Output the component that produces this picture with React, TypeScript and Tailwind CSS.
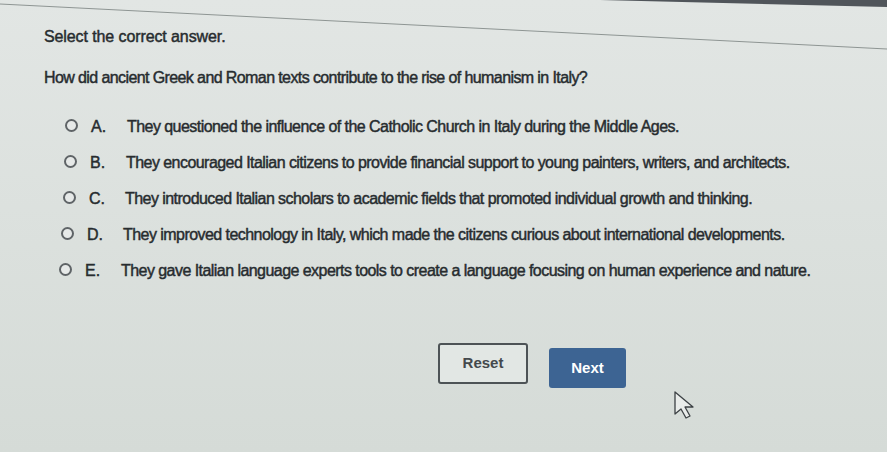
import React from "react";

const options = [
  { l: "A.", t: "They questioned the influence of the Catholic Church in Italy during the Middle Ages.", pl: "pl-[21px]" },
  { l: "B.", t: "They encouraged Italian citizens to provide financial support to young painters, writers, and architects.", pl: "pl-[20px]" },
  { l: "C.", t: "They introduced Italian scholars to academic fields that promoted individual growth and thinking.", pl: "pl-[19px]" },
  { l: "D.", t: "They improved technology in Italy, which made the citizens curious about international developments.", pl: "pl-[17px]" },
  { l: "E.", t: "They gave Italian language experts tools to create a language focusing on human experience and nature.", pl: "pl-[15px]" },
];

export default function App() {
  return (
    <div className="relative w-[887px] h-[452px] overflow-hidden bg-[#d9dedb] text-[#272c2f] [font-family:'Liberation_Sans',Arial,sans-serif] [-webkit-text-stroke:0.45px_#272c2f]">
      <svg className="absolute inset-0 pointer-events-none" width="887" height="452">
        <defs>
          <linearGradient id="g" x1="0" y1="0" x2="0" y2="1">
            <stop offset="0" stopColor="#e2e6e4" />
            <stop offset="1" stopColor="#d5dbd7" />
          </linearGradient>
        </defs>
        <rect width="887" height="452" fill="url(#g)" />
        <polygon points="600,0 887,0 887,7" fill="#50555a" />
        <line x1="0" y1="4" x2="887" y2="49" stroke="#8e9593" strokeWidth="1" />
      </svg>
      <div className="relative pl-[44px]">
        <div className="pt-[27px] text-[16px] leading-[20px] tracking-[-0.1px]">Select the correct answer.</div>
        <div className="pt-[21px] text-[16px] leading-[20px] tracking-[-0.6px]">
          How did ancient Greek and Roman texts contribute to the rise of humanism in Italy?
        </div>
        <div className="pt-[21px] flex flex-col">
          {options.map((o) => (
            <div key={o.l} className={`flex items-center h-[36px] ${o.pl}`}>
              <span className="mb-[3px] w-[13px] h-[13px] rounded-full border-2 border-[#5f6467] bg-[#e6e9e8] [-webkit-text-stroke:0]" />
              <span className="ml-[13px] w-[36px] text-[16px] leading-[20px]">{o.l}</span>
              <span className="text-[16px] leading-[20px] tracking-[-0.55px]">{o.t}</span>
            </div>
          ))}
        </div>
        <div className="flex items-start gap-[21px] pl-[394px] pt-[54px]">
          <button className="w-[90px] h-[41px] rounded-[3px] border-2 border-[#4d5356] bg-[#e2e7e4] text-[15px] font-bold text-[#44494c] [-webkit-text-stroke:0]">
            Reset
          </button>
          <button className="mt-[5px] w-[77px] h-[40px] rounded-[3px] bg-[#3d6493] text-[15px] font-bold text-white [-webkit-text-stroke:0]">
            Next
          </button>
        </div>
      </div>
      <svg className="absolute left-[672px] top-[390px]" width="34" height="30" viewBox="0 0 34 30">
        <path d="M3 2 L3 24 L9 19 L14 28 L18 26 L13 17 L21 17 Z" fill="#e9ecea" stroke="#3c4144" strokeWidth="1.3" strokeLinejoin="round" />
      </svg>
    </div>
  );
}
